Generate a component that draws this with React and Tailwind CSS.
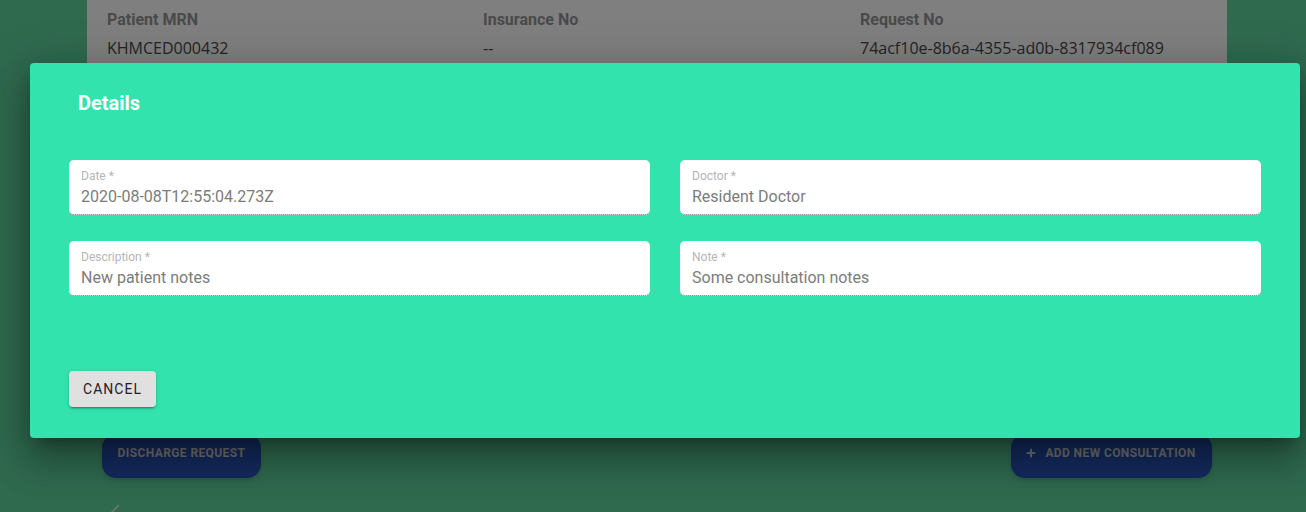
import React from 'react';
import { Plus } from 'lucide-react';

const roboto = { fontFamily: 'Roboto, "Liberation Sans", sans-serif' };

// Read-only filled field, MUI "disabled" look
const Field = ({ label, value }) => (
  <div className="h-[55px] rounded-[5px] bg-white border-b border-dotted border-[#666] px-3 pt-[9px]">
    <div className="text-[12px] leading-[14px] text-[#b5b5b5]">{label} *</div>
    <div className="mt-[4px] text-[16px] leading-[20px] text-[#7c7c7c]">{value}</div>
  </div>
);

const HeaderCol = ({ label, value }) => (
  <div className="flex flex-col">
    <div className="text-[16px] leading-[19px] font-bold text-[#959595]">{label}</div>
    <div className="mt-[9px] text-[16px] leading-[20px] text-[#4a4a4a]" style={{ fontFamily: '"Open Sans", sans-serif' }}>
      {value}
    </div>
  </div>
);

export default function App() {
  return (
    <div className="relative w-[1306px] h-[512px] overflow-hidden bg-[#5ed59e]" style={roboto}>
      {/* page underneath */}
      <div className="flex flex-col pl-[87px] w-[1227px]">
        <div className="h-[400px] bg-white px-5 pt-[10px]">
          <div className="grid grid-cols-[376px_377px_1fr]">
            <HeaderCol label="Patient MRN" value="KHMCED000432" />
            <HeaderCol label="Insurance No" value="--" />
            <HeaderCol label="Request No" value="74acf10e-8b6a-4355-ad0b-8317934cf089" />
          </div>
        </div>
        <div className="mt-[34px] flex justify-between pl-[15px] pr-[15px]">
          <button className="h-[44px] w-[159px] rounded-[14px] bg-[#2856bc] shadow-md pb-[6px] text-[12px] font-bold tracking-[0.4px] text-[#dedede]">
            DISCHARGE REQUEST
          </button>
          <button className="h-[44px] w-[201px] rounded-[14px] bg-[#2856bc] shadow-md pb-[6px] pr-[2px] flex items-center justify-center gap-[8px] text-[12px] font-bold tracking-[0.4px] text-[#dedede]">
            <Plus className="w-[12px] h-[12px]" strokeWidth={4} />
            ADD NEW CONSULTATION
          </button>
        </div>
        <div className="mt-[24px] pl-[22px]">
          <svg width="12" height="12" viewBox="0 0 12 12">
            <line x1="2" y1="11" x2="10" y2="3" stroke="#e8e8e8" strokeWidth="1.5" />
          </svg>
        </div>
      </div>

      {/* backdrop */}
      <div className="absolute inset-0 bg-black/50" />

      {/* dialog */}
      <div className="absolute left-[30px] top-[63px] w-[1270px] h-[375px] rounded-[4px] bg-[#33e3ad] shadow-[0_11px_15px_-7px_rgba(0,0,0,0.3),0_24px_38px_3px_rgba(0,0,0,0.2),0_9px_46px_8px_rgba(0,0,0,0.18)] px-[39px] pt-[28px]">
        <h2 className="pl-[9px] text-[20px] leading-[24px] font-bold text-white">Details</h2>
        <div className="mt-[45px] grid grid-cols-2 gap-x-[30px] gap-y-[26px]">
          <Field label="Date" value="2020-08-08T12:55:04.273Z" />
          <Field label="Doctor" value="Resident Doctor" />
          <Field label="Description" value="New patient notes" />
          <Field label="Note" value="Some consultation notes" />
        </div>
        <button className="mt-[75px] h-[36px] w-[87px] rounded-[4px] bg-[#e0e0e0] text-[14px] font-normal tracking-[1px] text-[#222] shadow-[0_3px_1px_-2px_rgba(0,0,0,0.2),0_2px_2px_0_rgba(0,0,0,0.14),0_1px_5px_0_rgba(0,0,0,0.12)]">
          CANCEL
        </button>
      </div>
    </div>
  );
}
